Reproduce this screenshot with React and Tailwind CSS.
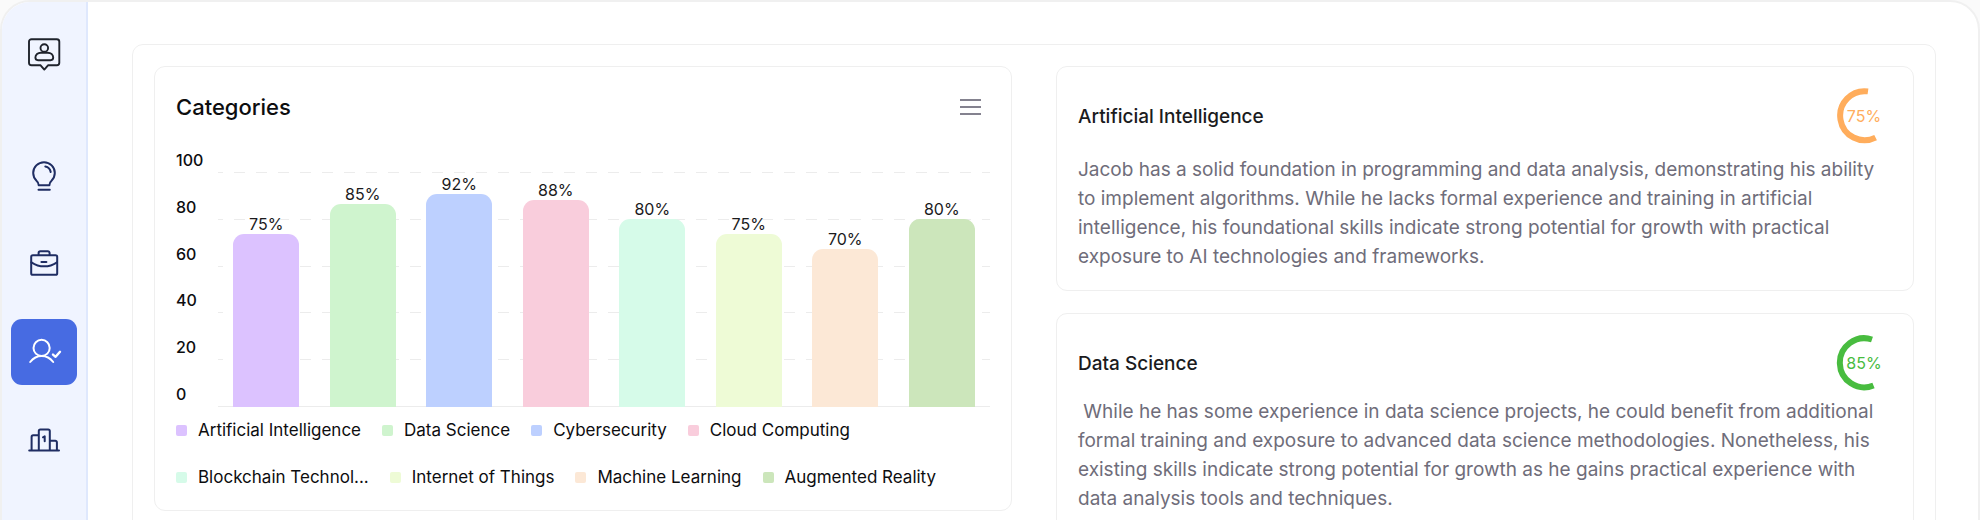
const categories = [
  { name: "Artificial Intelligence", value: 75, height: 173, bar: "bg-[#dcc2ff]" },
  { name: "Data Science", value: 85, height: 203, bar: "bg-[#cff4ce]" },
  { name: "Cybersecurity", value: 92, height: 213, bar: "bg-[#bdd0ff]" },
  { name: "Cloud Computing", value: 88, height: 207, bar: "bg-[#f9cddc]" },
  { name: "Blockchain Technol...", value: 80, height: 188, bar: "bg-[#d6fbe9]", short: true },
  { name: "Internet of Things", value: 75, height: 173, bar: "bg-[#eefbd6]" },
  { name: "Machine Learning", value: 70, height: 158, bar: "bg-[#fce8d6]" },
  { name: "Augmented Reality", value: 80, height: 188, bar: "bg-[#cce6bb]" },
];

const ticks = [100, 80, 60, 40, 20, 0];

const skills = [
  {
    name: "Artificial Intelligence",
    value: 75,
    color: "text-[#ffad5c]",
    arc: "M32 3.4A24.5 24.5 0 1 0 39.6 49.6",
    gap: "mt-[11px]",
    text: "Jacob has a solid foundation in programming and data analysis, demonstrating his ability to implement algorithms. While he lacks formal experience and training in artificial intelligence, his foundational skills indicate strong potential for growth with practical exposure to AI technologies and frameworks.",
  },
  {
    name: "Data Science",
    value: 85,
    color: "text-[#48bc3f]",
    arc: "M36 4.5A24.5 24.5 0 1 0 37.5 50.5",
    gap: "mt-[6px]",
    text: "\u00a0While he has some experience in data science projects, he could benefit from additional formal training and exposure to advanced data science methodologies. Nonetheless, his existing skills indicate strong potential for growth as he gains practical experience with data analysis tools and techniques.",
  },
];

function Icon({ children, width = 2 }) {
  return (
    <svg
      viewBox="0 0 44 44"
      className="size-11"
      fill="none"
      stroke="currentColor"
      strokeWidth={width}
      strokeLinecap="round"
      strokeLinejoin="round"
      aria-hidden="true"
    >
      {children}
    </svg>
  );
}

const navItems = [
  {
    label: "Insights",
    icon: (
      <Icon>
        <path d="M27.4 31.3c0-2.2.6-3.3 2.1-4.6a10.8 10.8 0 1 0-15 0c1.5 1.3 2.2 2.4 2.2 4.6z" />
        <path d="M16.5 35.7h11.3M23.3 12.4a6.8 6.8 0 0 1 5.4 5.6" />
      </Icon>
    ),
  },
  {
    label: "Jobs",
    icon: (
      <Icon>
        <rect x="9.2" y="13.2" width="26" height="19.6" rx="1.6" />
        <path d="M16.6 13v-2a1.8 1.8 0 0 1 1.8-1.8h7.4a1.8 1.8 0 0 1 1.8 1.8v2M9.4 20.3c8 5.4 17.6 5.4 25.6 0M19.4 20h5" />
      </Icon>
    ),
  },
  {
    label: "Candidate",
    active: true,
    icon: (
      <Icon>
        <circle cx="19.6" cy="17.9" r="8.1" />
        <path d="M8.2 32c3-3.9 7-6 11.5-6s8.5 2.1 11.5 6" />
        <path strokeWidth="2.4" d="m31 24.6 2.6 2.2 4.4-5" />
      </Icon>
    ),
  },
  {
    label: "Ranking",
    icon: (
      <Icon>
        <path d="M7.2 32.4h29.8M16.8 32.4V13a1.6 1.6 0 0 1 1.6-1.6h7.8a1.6 1.6 0 0 1 1.6 1.6v19.4M9.6 32.4V18.9a1.6 1.6 0 0 1 1.6-1.6h5.6M27.8 22.8h5.5a1.6 1.6 0 0 1 1.6 1.6v8" />
        <path d="M21 19.3l1.7-1v4.9" />
      </Icon>
    ),
  },
];

function Sidebar() {
  return (
    <aside className="flex w-[86px] shrink-0 flex-col items-center border-r-2 border-[#dfe8fd] bg-[#f0f4ff] pt-[19px]">
      <a href="#home" aria-label="Home" className="flex size-[66px] items-center justify-center text-[#1f232c]">
        <Icon width={1.9}>
          <path d="M9.5 7.2h25.3a2.5 2.5 0 0 1 2.5 2.5v21.1a2.5 2.5 0 0 1-2.5 2.5H26l-3.7 4.3-3.7-4.3H9.5A2.5 2.5 0 0 1 7 30.8V9.7a2.5 2.5 0 0 1 2.5-2.5z" />
          <circle cx="22.3" cy="16" r="3.8" />
          <path d="M16 28.2h12.6a2.6 2.6 0 0 0 2.6-2.6c0-3-2.5-4.9-5.4-4.9h-7c-2.9 0-5.4 1.9-5.4 4.9A2.6 2.6 0 0 0 16 28.2z" />
        </Icon>
      </a>
      <nav className="mt-14 flex flex-col gap-[22px]" aria-label="Main">
        {navItems.map((item) => (
          <button
            key={item.label}
            type="button"
            aria-label={item.label}
            className={
              item.active
                ? "flex size-[66px] items-center justify-center rounded-[11px] bg-[#476be2] text-white"
                : "flex size-[66px] items-center justify-center rounded-[11px] text-[#1f2d63]"
            }
          >
            {item.icon}
          </button>
        ))}
      </nav>
    </aside>
  );
}

function CategoriesCard() {
  return (
    <section className="rounded-[11px] border border-[#efefef] px-[21px] pt-6 pb-[21px]">
      <header className="flex h-8 items-center justify-between pr-[9px]">
        <h2 className="text-[22px] font-medium text-[#0d0d0f]">Categories</h2>
        <button type="button" aria-label="Chart menu" className="flex flex-col gap-[5px]">
          <span className="h-[2px] w-[21px] bg-[#84828f]" />
          <span className="h-[2px] w-[21px] bg-[#84828f]" />
          <span className="h-[2px] w-[21px] bg-[#84828f]" />
        </button>
      </header>

      <div className="mt-[25px] flex h-[259px]">
        <div className="flex w-[42px] shrink-0 flex-col justify-between pb-px text-base leading-6 font-medium text-[#0d0d0f]">
          {ticks.map((tick) => (
            <span key={tick}>{tick}</span>
          ))}
        </div>
        <div className="grid flex-1">
          <div className="col-start-1 row-start-1 flex flex-col justify-between pt-6">
            {ticks.map((tick) => (
              <svg key={tick} className="h-px w-full" aria-hidden="true">
                <line
                  x1="0"
                  x2="100%"
                  y1="0.5"
                  y2="0.5"
                  stroke="#ececec"
                  strokeDasharray={tick === 0 ? undefined : "11 11"}
                  strokeDashoffset="6"
                />
              </svg>
            ))}
          </div>
          <div className="col-start-1 row-start-1 grid grid-cols-8 items-end justify-items-center">
            {categories.map((c) => (
              <div key={c.name} className="flex w-[66px] flex-col items-center">
                <span className="text-base leading-5 text-[#1b1b1d]">{c.value}%</span>
                <div className={`w-full rounded-t-[11px] ${c.bar}`} style={{ height: c.height }} />
              </div>
            ))}
          </div>
        </div>
      </div>

      <ul className="mt-[11px] flex flex-wrap gap-x-[21px] gap-y-[23px] text-[17px] leading-6 text-[#0d0d0f]">
        {categories.map((c) => (
          <li key={c.name} className="flex items-center gap-[11px]">
            <span className={`size-[11px] rounded-[2px] ${c.bar}`} />
            <span className={c.short ? "min-w-[170px]" : ""}>{c.name}</span>
          </li>
        ))}
      </ul>
    </section>
  );
}

function SkillCard({ skill }) {
  return (
    <article className="rounded-[11px] border border-[#efefef] px-[21px] pt-[21px] pb-[19px]">
      <div className="flex items-center justify-between">
        <h3 className="text-[19px] leading-[29px] font-medium text-[#1b1b1d]">{skill.name}</h3>
        <div className={`grid size-[56px] place-items-center ${skill.color}`}>
          <svg viewBox="0 0 56 56" className="col-start-1 row-start-1 size-full" fill="none" aria-hidden="true">
            <path d={skill.arc} stroke="currentColor" strokeWidth="6" />
          </svg>
          <span className="col-start-1 row-start-1 text-base leading-6">{skill.value}%</span>
        </div>
      </div>
      <p className={`text-[19px] leading-[29px] text-[#6f6d7a] ${skill.gap}`}>{skill.text}</p>
    </article>
  );
}

export default function App() {
  return (
    <div className="h-screen overflow-hidden bg-[#fafafa] font-['Inter',sans-serif]">
      <div className="flex min-h-[1000px] overflow-hidden rounded-[30px] border-2 border-[#f0f0f0] bg-white">
        <Sidebar />
        <main className="flex flex-1 pt-[42px] pr-[42px] pl-11">
          <div className="grid flex-1 grid-cols-2 items-start gap-11 rounded-[11px] border border-[#efefef] p-[21px]">
            <CategoriesCard />
            <div className="flex flex-col gap-[22px]">
              {skills.map((skill) => (
                <SkillCard key={skill.name} skill={skill} />
              ))}
            </div>
          </div>
        </main>
      </div>
    </div>
  );
}
